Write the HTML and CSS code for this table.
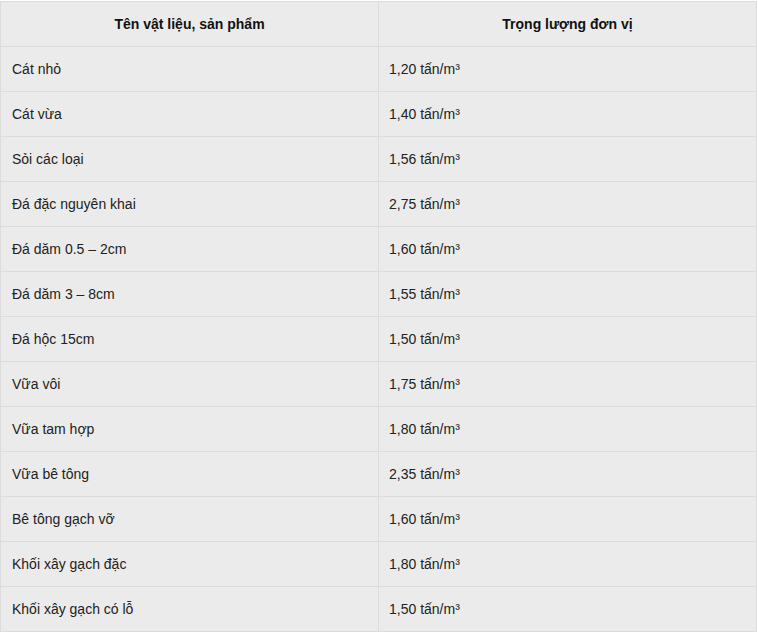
FILE: index.html
```html
<!DOCTYPE html>
<html lang="vi">
<head>
<meta charset="utf-8">
<link rel="stylesheet" href="styles.css">
</head>
<body>
<table class="tbl">
  <thead>
    <tr><th>Tên vật liệu, sản phẩm</th><th>Trọng lượng đơn vị</th></tr>
  </thead>
  <tbody>
    <tr><td>Cát nhỏ</td><td class="val">1,20 tấn/m³</td></tr>
    <tr><td>Cát vừa</td><td class="val">1,40 tấn/m³</td></tr>
    <tr><td>Sỏi các loại</td><td class="val">1,56 tấn/m³</td></tr>
    <tr><td>Đá đặc nguyên khai</td><td class="val">2,75 tấn/m³</td></tr>
    <tr><td>Đá dăm 0.5 – 2cm</td><td class="val">1,60 tấn/m³</td></tr>
    <tr><td>Đá dăm 3 – 8cm</td><td class="val">1,55 tấn/m³</td></tr>
    <tr><td>Đá hộc 15cm</td><td class="val">1,50 tấn/m³</td></tr>
    <tr><td>Vữa vôi</td><td class="val">1,75 tấn/m³</td></tr>
    <tr><td>Vữa tam hợp</td><td class="val">1,80 tấn/m³</td></tr>
    <tr><td>Vữa bê tông</td><td class="val">2,35 tấn/m³</td></tr>
    <tr><td>Bê tông gạch vỡ</td><td class="val">1,60 tấn/m³</td></tr>
    <tr><td>Khối xây gạch đặc</td><td class="val">1,80 tấn/m³</td></tr>
    <tr><td>Khối xây gạch có lỗ</td><td class="val">1,50 tấn/m³</td></tr>
  </tbody>
</table>
</body>
</html>
```

FILE: styles.css
```css
html, body {
  margin: 0;
  padding: 0;
  background: #ffffff;
}
body {
  font-family: "Liberation Sans", Arial, sans-serif;
  font-size: 14px;
  color: #222;
}
.tbl {
  border-collapse: collapse;
  width: 757px;
  margin-top: 1px;
  background: #ebebeb;
  table-layout: fixed;
}
.tbl th,
.tbl td {
  border: 1px solid #dcdcdc;
  padding: 0 11px;
  text-align: left;
  line-height: 16px;
  height: 45px;
  box-sizing: border-box;
}
.tbl td.val {
  padding-left: 10px;
}
.tbl th {
  height: 45px;
  text-align: center;
  font-weight: bold;
  color: #111;
}
```
